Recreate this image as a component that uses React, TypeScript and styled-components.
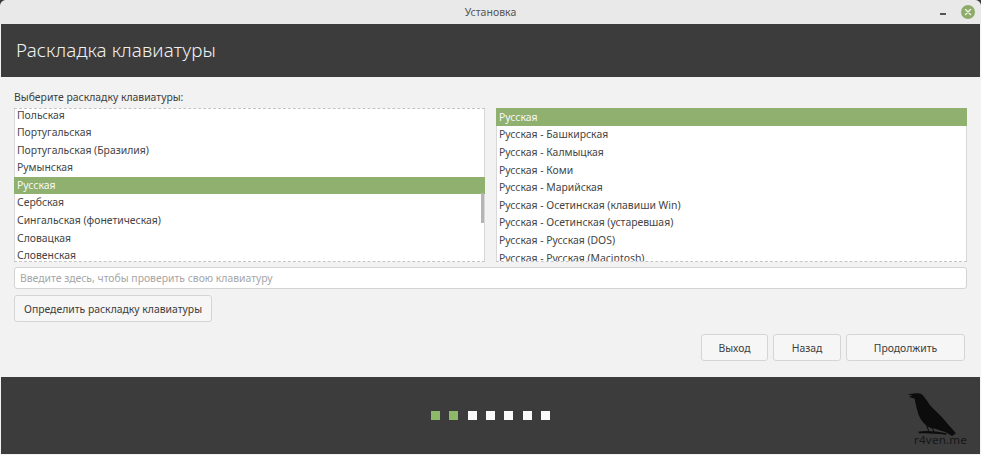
import React from "react";
import styled, { createGlobalStyle } from "styled-components";

const Global = createGlobalStyle`
  html, body { margin: 0; padding: 0; background: #ececec; }
  body { font-family: "Noto Sans", "Open Sans", sans-serif; }
`;

const Window = styled.div`
  width: 981px;
  height: 455px;
  display: flex;
  flex-direction: column;
  background: #f2f2f2;
  overflow: hidden;
  position: relative;
`;

const Corner = styled.div<{ $right?: boolean }>`
  position: absolute;
  top: 0;
  ${(p) => (p.$right ? "right: 0;" : "left: 0;")}
  width: 6px;
  height: 6px;
  background: radial-gradient(circle at ${(p) => (p.$right ? "0 100%" : "100% 100%")}, transparent 5.5px, #3a3a3a 6.5px);
`;

const TitleBar = styled.div`
  height: 24px;
  flex: none;
  background: #e9e9e9;
  display: flex;
  align-items: center;
  justify-content: center;
  position: relative;
  font-size: 10.5px;
  color: #555;
`;

const WindowControls = styled.div`
  position: absolute;
  right: 6px;
  top: 5px;
  display: flex;
  align-items: center;
  gap: 15px;
`;

const Minimize = styled.span`
  width: 6px;
  height: 2px;
  margin-top: 3px;
  background: #555;
`;

const Close = styled.svg`
  width: 14px;
  height: 14px;
  display: block;
`;

const Header = styled.div`
  height: 53px;
  flex: none;
  box-sizing: border-box;
  margin: 0 1px;
  background: #3c3c3c;
  display: flex;
  align-items: center;
  padding: 0 0 2px 15px;
  font-size: 18.8px;
  font-weight: 300;
  letter-spacing: 0.1px;
  color: #f1f1f1;
`;

const Content = styled.div`
  height: 300px;
  flex: none;
  box-sizing: border-box;
  padding: 13px 14px 0 14px;
  display: flex;
  flex-direction: column;
  color: #3f3f3f;
  font-size: 10.4px;
`;

const Label = styled.div`
  height: 18px;
  line-height: 14px;
  color: #3c3c3c;
`;

const Lists = styled.div`
  display: flex;
  gap: 11px;
`;

const ListBox = styled.div<{ $dashTop?: boolean }>`
  flex: none;
  width: 471px;
  height: 154px;
  box-sizing: border-box;
  background: #fff;
  overflow: hidden;
  position: relative;
  box-shadow: inset 1px 0 #d8d8d8, inset -1px 0 #d8d8d8;
  border-top: ${(p) => (p.$dashTop ? "1px dashed #c4c4c4" : "none")};
  border-bottom: 1px dashed #c4c4c4;
`;

const Rows = styled.div<{ $shift: number }>`
  margin-top: ${(p) => p.$shift}px;
  display: flex;
  flex-direction: column;
`;

const Row = styled.div<{ $selected?: boolean; $first?: boolean }>`
  height: ${(p) => (p.$first ? "18.4px" : "17.6px")};
  line-height: ${(p) => (p.$first ? "18.4px" : "17.6px")};
  padding-left: 3px;
  flex: none;
  white-space: nowrap;
  background: ${(p) => (p.$selected ? "#8fb06f" : "transparent")};
  color: ${(p) => (p.$selected ? "#f8f8f8" : "#444")};
`;

const ScrollThumb = styled.div`
  position: absolute;
  right: 1px;
  top: 84px;
  width: 3px;
  height: 30px;
  background: #b4b4b4;
`;

const TestInput = styled.input`
  width: 953px;
  height: 22px;
  box-sizing: border-box;
  margin-top: 5px;
  padding: 0 5px;
  background: #fff;
  border: 1px solid #d3d3d3;
  border-radius: 3px;
  font: inherit;
  outline: none;
  &::placeholder { color: #a6a6a6; opacity: 1; }
`;

const Button = styled.button<{ $width: number }>`
  width: ${(p) => p.$width}px;
  height: 27px;
  box-sizing: border-box;
  padding: 0;
  background: #f6f6f6;
  border: 1px solid #d5d5d5;
  border-radius: 3px;
  font: inherit;
  color: #3c3c3c;
`;

const DetectRow = styled.div`
  margin-top: 6px;
  display: flex;
`;

const Actions = styled.div`
  margin-top: 12px;
  padding-right: 2px;
  display: flex;
  justify-content: flex-end;
  gap: 5px;
`;

const Footer = styled.div`
  height: 77px;
  flex: none;
  margin: 0 1px 1px 1px;
  background: #3c3c3c;
  display: flex;
  align-items: center;
  justify-content: center;
  gap: 9.4px;
  position: relative;
`;

const Dot = styled.span<{ $done?: boolean }>`
  width: 9px;
  height: 9px;
  background: ${(p) => (p.$done ? "#8fb96a" : "#fafafa")};
`;

const Watermark = styled.div`
  position: absolute;
  left: 879px;
  top: 3px;
  width: 101px;
  height: 75px;
`;

const Raven = styled.svg`
  display: block;
  width: 101px;
  height: 75px;
`;

const WatermarkText = styled.span`
  position: absolute;
  left: 34px;
  top: 53px;
  font-size: 11.6px;
  line-height: 14px;
  letter-spacing: 0.2px;
  color: #161616;
`;

const leftRows = ["Польская", "Португальская", "Португальская (Бразилия)", "Румынская", "Русская", "Сербская", "Сингальская (фонетическая)", "Словацкая", "Словенская"];
const rightRows = ["Русская", "Русская - Башкирская", "Русская - Калмыцкая", "Русская - Коми", "Русская - Марийская", "Русская - Осетинская (клавиши Win)", "Русская - Осетинская (устаревшая)", "Русская - Русская (DOS)", "Русская - Русская (Macintosh)"];

export default function App() {
  return (
    <Window>
      <Global />
      <TitleBar>
        Установка
        <WindowControls>
          <Minimize />
          <Close viewBox="0 0 14 14">
            <circle cx="7" cy="7" r="7" fill="#8dac6a" />
            <path d="M4.5 4.5l5 5M9.5 4.5l-5 5" stroke="#eef3e8" strokeWidth="1.4" strokeLinecap="round" />
          </Close>
        </WindowControls>
      </TitleBar>
      <Corner />
      <Corner $right />
      <Header>Раскладка клавиатуры</Header>
      <Content>
        <Label>Выберите раскладку клавиатуры:</Label>
        <Lists>
          <ListBox $dashTop>
            <Rows $shift={-2.5}>
              {leftRows.map((r) => (
                <Row key={r} $selected={r === "Русская"}>{r}</Row>
              ))}
            </Rows>
            <ScrollThumb />
          </ListBox>
          <ListBox>
            <Rows $shift={0}>
              {rightRows.map((r, i) => (
                <Row key={r} $selected={i === 0} $first={i === 0}>{r}</Row>
              ))}
            </Rows>
          </ListBox>
        </Lists>
        <TestInput placeholder="Введите здесь, чтобы проверить свою клавиатуру" />
        <DetectRow>
          <Button $width={198}>Определить раскладку клавиатуры</Button>
        </DetectRow>
        <Actions>
          <Button $width={67}>Выход</Button>
          <Button $width={68}>Назад</Button>
          <Button $width={119}>Продолжить</Button>
        </Actions>
      </Content>
      <Footer>
        <Dot $done />
        <Dot $done />
        <Dot />
        <Dot />
        <Dot />
        <Dot />
        <Dot />
        <Watermark>
          <Raven viewBox="0 0 303 225">
            <path d="M83 43 L108 40 Q124 38 132 50 Q142 62 150 76 Q168 94 186 112 Q206 136 228 160 L216 168 L196 156 Q180 152 166 146 Q146 146 134 132 Q118 116 112 92 Q106 70 104 56 L86 50 L98 47 Z" fill="#0c0c0c" />
            <path d="M114 155 Q150 150 200 160 L198 164 Q150 158 118 160 Z" fill="#0c0c0c" />
            <path d="M140 136 L146 154 M156 142 L162 156" stroke="#0c0c0c" strokeWidth="3" />
          </Raven>
          <WatermarkText>r4ven.me</WatermarkText>
        </Watermark>
      </Footer>
    </Window>
  );
}
